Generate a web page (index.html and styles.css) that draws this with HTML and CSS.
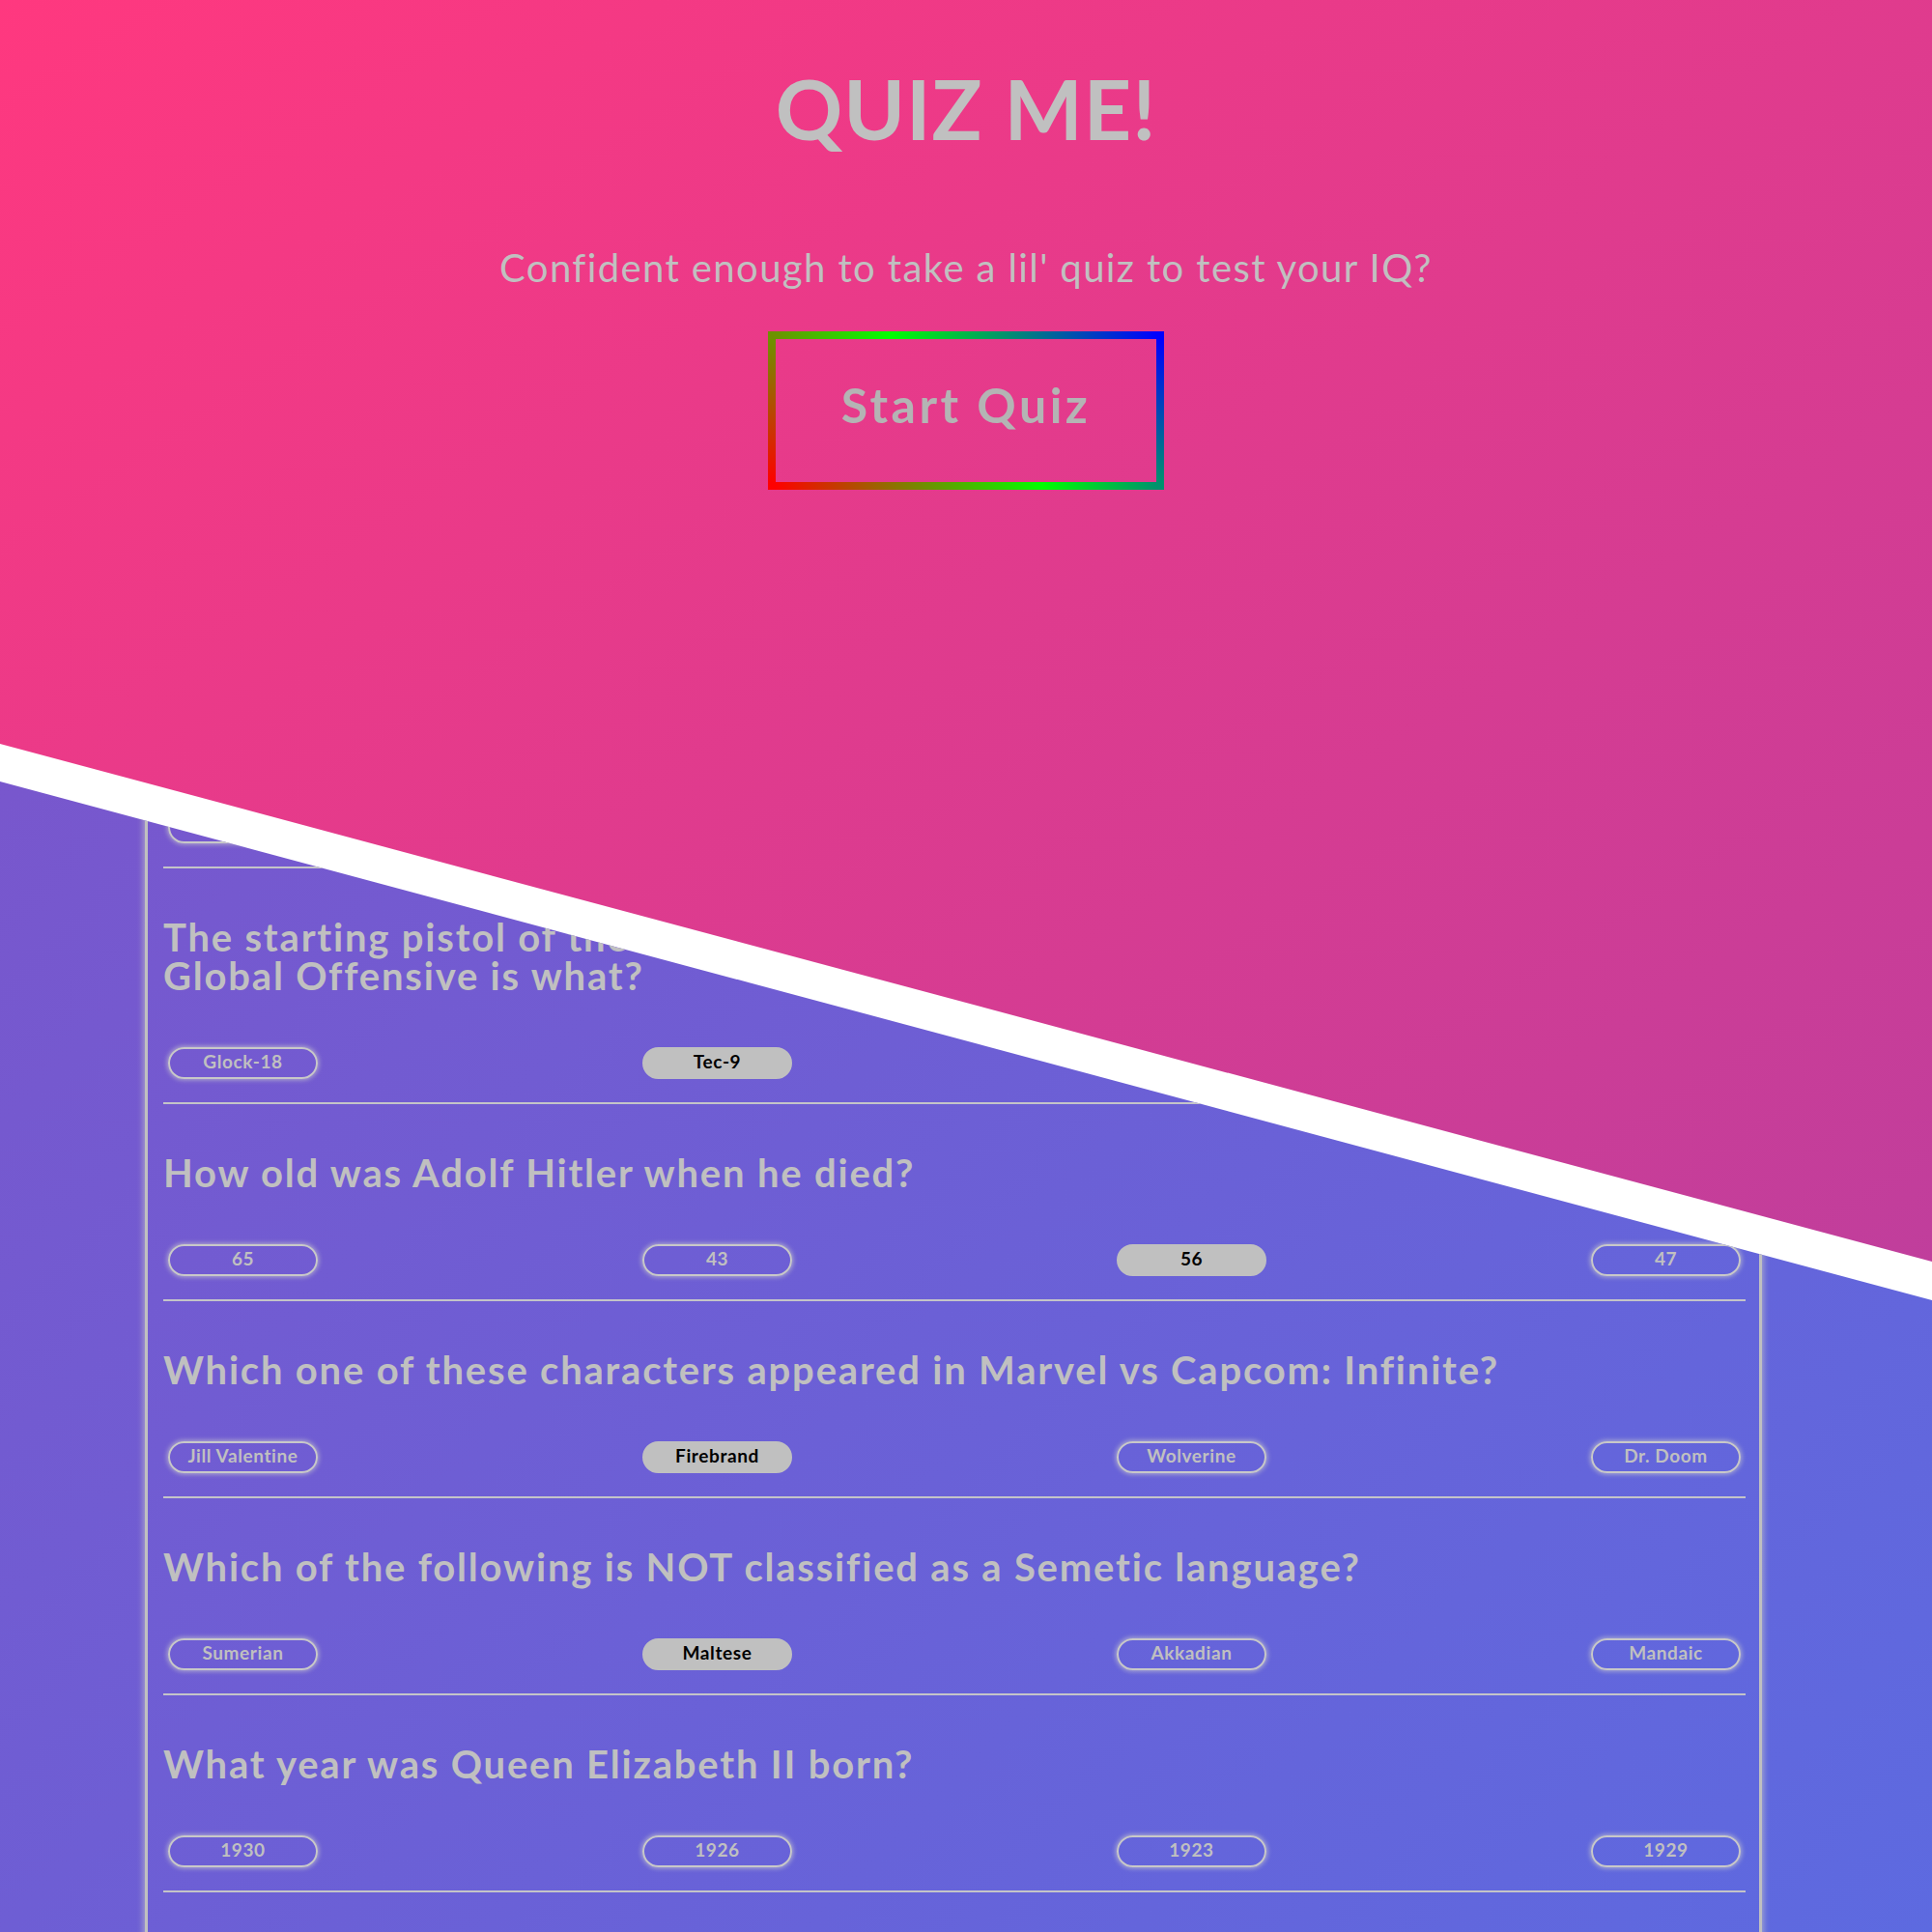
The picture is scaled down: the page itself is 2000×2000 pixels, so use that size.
FILE: index.html
```html
<!DOCTYPE html>
<html lang="en">
<head>
<meta charset="utf-8">
<title>Quiz Me!</title>
<link rel="stylesheet" href="styles.css">
</head>
<body>
  <main class="quiz-area">
    <section class="quiz-box">
      <div class="question">
        <h2>What is the capital of Australia?</h2>
        <div class="answers">
          <button class="answer">Sydney</button>
          <button class="answer selected">Canberra</button>
          <button class="answer">Melbourne</button>
          <button class="answer">Perth</button>
        </div>
      </div>
      <div class="question">
        <h2>How many planets are in our Solar System?</h2>
        <div class="answers">
          <button class="answer">7</button>
          <button class="answer selected">8</button>
          <button class="answer">9</button>
          <button class="answer">10</button>
        </div>
      </div>
      <div class="question">
        <h2>The starting pistol of the Terrorist team in competitive Counter-Strike:
Global Offensive is what?</h2>
        <div class="answers">
          <button class="answer">Glock-18</button>
          <button class="answer selected">Tec-9</button>
          <button class="answer">Desert Eagle</button>
          <button class="answer">Dual Berettas</button>
        </div>
      </div>
      <div class="question">
        <h2>How old was Adolf Hitler when he died?</h2>
        <div class="answers">
          <button class="answer">65</button>
          <button class="answer">43</button>
          <button class="answer selected">56</button>
          <button class="answer">47</button>
        </div>
      </div>
      <div class="question">
        <h2>Which one of these characters appeared in Marvel vs Capcom: Infinite?</h2>
        <div class="answers">
          <button class="answer">Jill Valentine</button>
          <button class="answer selected">Firebrand</button>
          <button class="answer">Wolverine</button>
          <button class="answer">Dr. Doom</button>
        </div>
      </div>
      <div class="question">
        <h2>Which of the following is NOT classified as a Semetic language?</h2>
        <div class="answers">
          <button class="answer">Sumerian</button>
          <button class="answer selected">Maltese</button>
          <button class="answer">Akkadian</button>
          <button class="answer">Mandaic</button>
        </div>
      </div>
      <div class="question">
        <h2>What year was Queen Elizabeth II born?</h2>
        <div class="answers">
          <button class="answer">1930</button>
          <button class="answer">1926</button>
          <button class="answer">1923</button>
          <button class="answer">1929</button>
        </div>
      </div>
    </section>
  </main>

  <header class="hero">
    <h1 class="title">QUIZ ME!</h1>
    <p class="subtitle">Confident enough to take a lil' quiz to test your IQ?</p>
    <button class="start-btn">Start Quiz</button>
  </header>
</body>
</html>
```
FILE: styles.css
```css
html {
  overflow: hidden;
}

body {
  margin: 0;
  background: #ffffff;
  font-family: "Lato", "Noto Sans", sans-serif;
  color: #c0c0c0;
  position: relative;
}

/* ---------- purple quiz area ---------- */
.quiz-area {
  height: 2000px;
  overflow: hidden;
  box-sizing: border-box;
  padding-top: 488px;
  background: linear-gradient(to bottom right, #7f52c8, #5d6ae0);
  clip-path: polygon(0 809px, 100% 1346px, 100% 100%, 0 100%);
}

.quiz-box {
  margin-left: 150px;
  width: 1674px;
  box-sizing: border-box;
  border: 3px solid #c0c0c0;
  box-shadow: 0 0 7px 1px rgba(200, 200, 200, 0.75);
  padding: 0 14px 120px 16px;
}

.question {
  padding: 51px 0 24px;
  border-bottom: 2px solid #c4c4c8;
}

.question h2 {
  margin: 0 0 54px;
  font-size: 40px;
  line-height: 40px;
  font-weight: 700;
  letter-spacing: 1.8px;
  white-space: pre-line;
  color: #c0c0c0;
}

.answers {
  display: flex;
  justify-content: space-between;
  padding: 0 5px 0 5px;
}

.answer {
  width: 155px;
  height: 33px;
  box-sizing: border-box;
  border: 2px solid #c8c8c8;
  border-radius: 17px;
  background: transparent;
  box-shadow: 0 0 5px 1px rgba(205, 205, 205, 0.7);
  color: #c0c0c0;
  font-family: "Lato", "Noto Sans", sans-serif;
  font-size: 19px;
  line-height: 19px;
  font-weight: 700;
  letter-spacing: 0.6px;
  padding: 0 0 4px;
  display: flex;
  align-items: center;
  justify-content: center;
}

.answer.selected {
  background: #c0c0c0;
  border-color: #c0c0c0;
  box-shadow: none;
  color: #000000;
}

/* ---------- pink hero overlay ---------- */
.hero {
  position: absolute;
  top: 0;
  left: 0;
  width: 100%;
  height: 1306px;
  background: linear-gradient(to bottom right, #ff387f, #c03e9c);
  clip-path: polygon(0 0, 100% 0, 100% 1306px, 0 770px);
  display: flex;
  flex-direction: column;
  align-items: center;
}

.title {
  margin: 69px 0 0;
  font-size: 86px;
  line-height: 86px;
  font-weight: 700;
  letter-spacing: 1px;
  color: #c0c0c0;
}

.subtitle {
  margin: 102px 0 0;
  font-size: 40px;
  line-height: 40px;
  font-weight: 400;
  letter-spacing: 1.4px;
  color: #c0c0c0;
}

.start-btn {
  margin-top: 46px;
  width: 410px;
  height: 164px;
  box-sizing: border-box;
  border: 8px solid transparent;
  border-image: linear-gradient(45deg, #ff0000, #00ff00, #0000ff) 1;
  background: transparent;
  color: #b4b4b4;
  font-family: "Lato", "Noto Sans", sans-serif;
  font-size: 50px;
  line-height: 50px;
  font-weight: 700;
  letter-spacing: 3.5px;
  padding: 0 0 13px;
  display: flex;
  align-items: center;
  justify-content: center;
}
```
